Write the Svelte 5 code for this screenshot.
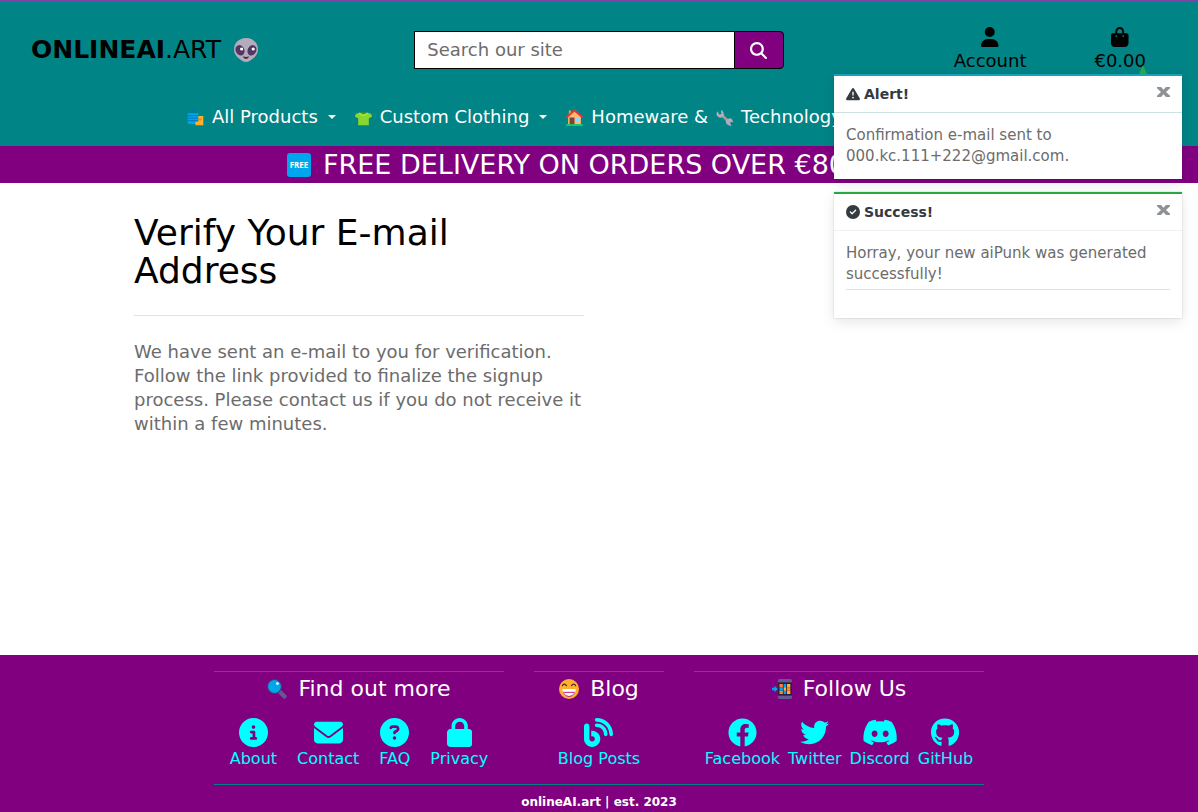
<script>
  const icons = {
    user: ['0 0 448 512', 'M224 256A128 128 0 1 0 224 0a128 128 0 1 0 0 256zm-45.7 48C79.8 304 0 383.8 0 482.3C0 498.7 13.3 512 29.7 512H418.3c16.4 0 29.7-13.3 29.7-29.7C448 383.8 368.2 304 269.7 304H178.3z'],
    bag: ['0 0 448 512', 'M160 112c0-35.3 28.7-64 64-64s64 28.7 64 64v48H160V112zm-48 48H48c-26.5 0-48 21.5-48 48V416c0 53 43 96 96 96H352c53 0 96-43 96-96V208c0-26.5-21.5-48-48-48H336V112C336 50.1 285.9 0 224 0S112 50.1 112 112v48zm24 48a24 24 0 1 1 0 48 24 24 0 1 1 0-48zm152 24a24 24 0 1 1 48 0 24 24 0 1 1 -48 0z'],
    search: ['0 0 512 512', 'M416 208c0 45.9-14.9 88.3-40 122.7L502.6 457.4c12.5 12.5 12.5 32.8 0 45.3s-32.8 12.5-45.3 0L330.7 376c-34.4 25.2-76.8 40-122.7 40C93.1 416 0 322.9 0 208S93.1 0 208 0S416 93.1 416 208zM208 352a144 144 0 1 0 0-288 144 144 0 1 0 0 288z'],
    warning: ['0 0 512 512', 'M256 32c14.2 0 27.3 7.5 34.5 19.8l216 368c7.3 12.4 7.3 27.7 .2 40.1S486.3 480 472 480H40c-14.3 0-27.6-7.7-34.7-20.1s-7-27.8 .2-40.1l216-368C228.7 39.5 241.8 32 256 32zm0 128c-13.3 0-24 10.7-24 24V296c0 13.3 10.7 24 24 24s24-10.7 24-24V184c0-13.3-10.7-24-24-24zm32 224a32 32 0 1 0 -64 0 32 32 0 1 0 64 0z'],
    check: ['0 0 512 512', 'M256 512A256 256 0 1 0 256 0a256 256 0 1 0 0 512zM369 209L241 337c-9.4 9.4-24.6 9.4-33.9 0l-64-64c-9.4-9.4-9.4-24.6 0-33.9s24.6-9.4 33.9 0l47 47L335 175c9.4-9.4 24.6-9.4 33.9 0s9.4 24.6 0 33.9z'],
    info: ['0 0 512 512', 'M256 512A256 256 0 1 0 256 0a256 256 0 1 0 0 512zM216 336h24V272H216c-13.3 0-24-10.7-24-24s10.7-24 24-24h48c13.3 0 24 10.7 24 24v88h8c13.3 0 24 10.7 24 24s-10.7 24-24 24H216c-13.3 0-24-10.7-24-24s10.7-24 24-24zm40-208a32 32 0 1 1 0 64 32 32 0 1 1 0-64z'],
    envelope: ['0 0 512 512', 'M48 64C21.5 64 0 85.5 0 112c0 15.1 7.1 29.3 19.2 38.4L236.8 313.6c11.4 8.5 27 8.5 38.4 0L492.8 150.4c12.1-9.1 19.2-23.3 19.2-38.4c0-26.5-21.5-48-48-48H48zM0 176V384c0 35.3 28.7 64 64 64H448c35.3 0 64-28.7 64-64V176L294.4 339.2c-22.8 17.1-54 17.1-76.8 0L0 176z'],
    question: ['0 0 512 512', 'M256 512A256 256 0 1 0 256 0a256 256 0 1 0 0 512zM169.8 165.3c7.9-22.3 29.1-37.3 52.8-37.3h58.3c34.9 0 63.1 28.3 63.1 63.1c0 22.6-12.1 43.5-31.7 54.8L280 264.4c-.2 13-10.9 23.6-24 23.6c-13.3 0-24-10.7-24-24V250.5c0-8.6 4.6-16.5 12.1-20.8l44.3-25.4c4.7-2.7 7.6-7.7 7.6-13.1c0-8.4-6.8-15.1-15.1-15.1H222.6c-3.4 0-6.4 2.1-7.5 5.3l-.4 1.2c-4.4 12.5-18.2 19-30.6 14.6s-19-18.2-14.6-30.6l.4-1.2zM224 352a32 32 0 1 1 64 0 32 32 0 1 1 -64 0z'],
    lock: ['0 0 448 512', 'M144 144v48H304V144c0-44.2-35.8-80-80-80s-80 35.8-80 80zM80 192V144C80 64.5 144.5 0 224 0s144 64.5 144 144v48h16c35.3 0 64 28.7 64 64V448c0 35.3-28.7 64-64 64H64c-35.3 0-64-28.7-64-64V256c0-35.3 28.7-64 64-64H80z'],
    blog: ['0 0 512 512', 'M192 32c0 17.7 14.3 32 32 32c123.7 0 224 100.3 224 224c0 17.7 14.3 32 32 32s32-14.3 32-32C512 128.9 383.1 0 224 0c-17.7 0-32 14.3-32 32zm0 96c0 17.7 14.3 32 32 32c70.7 0 128 57.3 128 128c0 17.7 14.3 32 32 32s32-14.3 32-32c0-106-86-192-192-192c-17.7 0-32 14.3-32 32zM96 144c0-26.5-21.5-48-48-48S0 117.5 0 144V368c0 79.5 64.5 144 144 144s144-64.5 144-144s-64.5-144-144-144H128v96h16c26.5 0 48 21.5 48 48s-21.5 48-48 48s-48-21.5-48-48V144z'],
    facebook: ['0 0 512 512', 'M504 256C504 119 393 8 256 8S8 119 8 256c0 123.78 90.69 226.38 209.25 245V327.69h-63V256h63v-54.64c0-62.15 37-96.48 93.67-96.48 27.14 0 55.52 4.84 55.52 4.84v61h-31.28c-30.8 0-40.41 19.12-40.41 38.73V256h68.78l-11 71.69h-57.78V501C413.31 482.38 504 379.78 504 256z'],
    twitter: ['0 0 512 512', 'M459.37 151.716c.325 4.548.325 9.097.325 13.645 0 138.72-105.583 298.558-298.558 298.558-59.452 0-114.68-17.219-161.137-47.106 8.447.974 16.568 1.299 25.34 1.299 49.055 0 94.213-16.568 130.274-44.832-46.132-.975-84.792-31.188-98.112-72.772 6.498.974 12.995 1.624 19.818 1.624 9.421 0 18.843-1.3 27.614-3.573-48.081-9.747-84.143-51.98-84.143-102.985v-1.299c13.969 7.797 30.214 12.67 47.431 13.319-28.264-18.843-46.781-51.005-46.781-87.391 0-19.492 5.197-37.36 14.294-52.954 51.655 63.675 129.3 105.258 216.365 109.807-1.624-7.797-2.599-15.918-2.599-24.04 0-57.828 46.782-104.934 104.934-104.934 30.213 0 57.502 12.67 76.67 33.137 23.715-4.548 46.456-13.32 66.599-25.34-7.798 24.366-24.366 44.833-46.132 57.827 21.117-2.273 41.584-8.122 60.426-16.243-14.292 20.791-32.161 39.308-52.628 54.253z'],
    discord: ['0 0 640 512', 'M524.531,69.836a1.5,1.5,0,0,0-.764-.7A485.065,485.065,0,0,0,404.081,32.03a1.816,1.816,0,0,0-1.923.91,337.461,337.461,0,0,0-14.9,30.6,447.848,447.848,0,0,0-134.426,0,309.541,309.541,0,0,0-15.135-30.6,1.89,1.89,0,0,0-1.924-.91A483.689,483.689,0,0,0,116.085,69.137a1.712,1.712,0,0,0-.788.676C39.068,183.651,18.186,294.69,28.43,404.354a2.016,2.016,0,0,0,.765,1.375A487.666,487.666,0,0,0,176.02,479.918a1.9,1.9,0,0,0,2.063-.676A348.2,348.2,0,0,0,208.12,430.4a1.86,1.86,0,0,0-1.019-2.588,321.173,321.173,0,0,1-45.868-21.853,1.885,1.885,0,0,1-.185-3.126c3.082-2.309,6.166-4.711,9.109-7.137a1.819,1.819,0,0,1,1.9-.256c96.229,43.917,200.41,43.917,295.5,0a1.812,1.812,0,0,1,1.924.233c2.944,2.426,6.027,4.851,9.132,7.16a1.884,1.884,0,0,1-.162,3.126,301.407,301.407,0,0,1-45.89,21.83,1.875,1.875,0,0,0-1,2.611,391.055,391.055,0,0,0,30.014,48.815,1.864,1.864,0,0,0,2.063.7A486.048,486.048,0,0,0,610.7,405.729a1.882,1.882,0,0,0,.765-1.352C623.729,277.594,590.933,167.465,524.531,69.836ZM222.491,337.58c-28.972,0-52.844-26.587-52.844-59.239S193.056,219.1,222.491,219.1c29.665,0,53.306,26.82,52.843,59.239C275.334,310.993,251.924,337.58,222.491,337.58Zm195.38,0c-28.971,0-52.843-26.587-52.843-59.239S388.437,219.1,417.871,219.1c29.667,0,53.307,26.82,52.844,59.239C470.715,310.993,447.538,337.58,417.871,337.58Z'],
    github: ['0 0 496 512', 'M165.9 397.4c0 2-2.3 3.6-5.2 3.6-3.3.3-5.6-1.3-5.6-3.6 0-2 2.3-3.6 5.2-3.6 3-.3 5.6 1.3 5.6 3.6zm-31.1-4.5c-.7 2 1.3 4.3 4.3 4.9 2.6 1 5.6 0 6.2-2s-1.3-4.3-4.3-5.2c-2.6-.7-5.5.3-6.2 2.3zm44.2-1.7c-2.9.7-4.9 2.6-4.6 4.9.3 2 2.9 3.3 5.9 2.6 2.9-.7 4.9-2.6 4.6-4.6-.3-1.9-3-3.2-5.9-2.9zM244.8 8C106.1 8 0 113.3 0 252c0 110.9 69.8 205.8 169.5 239.2 12.8 2.3 17.3-5.6 17.3-12.1 0-6.2-.3-40.4-.3-61.4 0 0-70 15-84.7-29.8 0 0-11.4-29.1-27.8-36.6 0 0-22.9-15.7 1.6-15.4 0 0 24.9 2 38.6 25.8 21.9 38.6 58.6 27.5 72.9 20.9 2.3-16 8.8-27.1 16-33.7-55.9-6.2-112.3-14.3-112.3-110.5 0-27.5 7.6-41.3 23.6-58.9-2.6-6.5-11.1-33.3 2.6-67.9 20.9-6.5 69 27 69 27 20-5.6 41.5-8.5 62.8-8.5s42.8 2.9 62.8 8.5c0 0 48.1-33.6 69-27 13.7 34.7 5.2 61.4 2.6 67.9 16 17.7 25.8 31.5 25.8 58.9 0 96.5-58.9 104.2-114.8 110.5 9.2 7.9 17 22.9 17 46.4 0 33.7-.3 75.4-.3 83.6 0 6.5 4.6 14.4 17.3 12.1C428.2 457.8 496 362.9 496 252 496 113.3 383.5 8 244.8 8z'],
  };

  const footerGroups = [
    { title: 'Find out more', emoji: 'glass', wide: true, links: [['info', 'About'], ['envelope', 'Contact'], ['question', 'FAQ'], ['lock', 'Privacy']] },
    { title: 'Blog', emoji: 'grin', wide: false, links: [['blog', 'Blog Posts']] },
    { title: 'Follow Us', emoji: 'phone', wide: true, social: true, links: [['facebook', 'Facebook'], ['twitter', 'Twitter'], ['discord', 'Discord'], ['github', 'GitHub']] },
  ];

  let toasts = $state([
    { kind: 'info', icon: 'warning', title: 'Alert!', text: 'Confirmation e-mail sent to 000.kc.111+222@gmail.com.' },
    { kind: 'success', icon: 'check', title: 'Success!', text: 'Horray, your new aiPunk was generated successfully!' },
  ]);

  const dismiss = (kind) => (toasts = toasts.filter((t) => t.kind !== kind));
</script>

{#snippet icon(name)}
  <svg class="icon" viewBox={icons[name][0]} fill="currentColor" aria-hidden="true"><path d={icons[name][1]} /></svg>
{/snippet}

{#snippet emoji(name)}
  <svg class="emoji" viewBox="0 0 24 24" aria-hidden="true">
    {#if name === 'alien'}
      <path d="M12 0C5 0 0 5 0 11.500c0 5 3.500 8 7 10.500 3 2.500 7 2.500 10 0 3.500-2.500 7-5.500 7-10.500C24 5 19 0 12 0z" fill="#b4acbc" />
      <ellipse cx="6" cy="12.300" rx="4.300" ry="5.400" transform="rotate(-25 6 12.300)" fill="#533566" />
      <ellipse cx="18" cy="12.300" rx="4.300" ry="5.400" transform="rotate(25 18 12.300)" fill="#533566" />
      <circle cx="7.600" cy="11" r="1.600" fill="#fff" /><circle cx="19.200" cy="11" r="1.600" fill="#fff" />
      <path d="M9.500 19c1 1.800 4 1.800 5 0l-2.500.500z" fill="#402a32" stroke="#402a32" />
    {:else if name === 'bags'}
      <path d="M6 7V4q0-3 3-3t3 3v3" fill="none" stroke="#0074ba" stroke-width="1.500" />
      <path d="M1 6h15v15H3q-2 0-2-2z" fill="#00a6ed" />
      <path d="M1 9.500h15M1 13h15M1 16.500h15" stroke="#0074ba" stroke-width="1.300" />
      <path d="M16 10h7v13H12v-5h4z" fill="#ffb02e" /><path d="M17 13q0 3 1.500 3t1.500-3" fill="none" stroke="#d67d00" stroke-width="1.300" />
    {:else if name === 'shirt'}
      <path d="M7 5Q12 8 17 5l6 2 1 4-4.500 2V23h-15V13L0 11l1-4z" fill="#86d72f" />
      <path d="M8 5q4 5 8 0l-2-.500h-4z" fill="#44911b" /><path d="M6 6q6 6 12 0" fill="none" stroke="#c3ef3c" stroke-width="1.300" />
    {:else if name === 'house'}
      <path d="M4 2h3v7H4z" fill="#c3b139" /><path d="M3 10 12 3l9 8v11H3z" fill="#ffb978" />
      <path d="M0 11 12 0l12 11-1.500 2L12 4 1.500 13z" fill="#f8312f" />
      <path d="M5 12h7v10H5z" fill="#7d4533" /><path d="M14 12h5v5h-5z" fill="#8dd9ff" /><path d="M0 21.500h24V24H0z" fill="#00d26a" />
    {:else if name === 'wrench'}
      <path d="m7 7 12 12" stroke="#9b9b9b" stroke-width="4" />
      <path d="M2 3q-3 5 1 8 4 3 8-1 1-5-3-9L7 4l1 3-3 1zM16 14q-4 3-1 7 3 3 7 3l-2-4 1-2 3 1q0-5-4-6z" fill="#b4acbc" />
    {:else if name === 'free'}
      <rect width="24" height="24" rx="3" fill="#00a6ed" />
      <text x="12" y="15" text-anchor="middle" font-size="8" font-weight="700" font-family="Open Sans, sans-serif" fill="#fff">FREE</text>
    {:else if name === 'glass'}
      <path d="m15 15 6 6" stroke="#635994" stroke-width="5" stroke-linecap="round" />
      <circle cx="9" cy="9" r="9" fill="#533566" /><circle cx="9" cy="9" r="7.700" fill="#00a6ed" /><circle cx="12.500" cy="5.500" r="1.700" fill="#fff" />
    {:else if name === 'grin'}
      <circle cx="12" cy="12" r="12" fill="#ffb02e" />
      <path d="M4 8q2-4 5 0M15 8q3-4 5 0" fill="none" stroke="#402a32" stroke-width="1.500" stroke-linecap="round" />
      <path d="M4 12h16q0 9-8 9t-8-9z" fill="#fff" /><path d="M5 16h14M5.500 17q2 4 6.500 4t6.500-4" fill="none" stroke="#bb1d80" stroke-width="1.200" />
    {:else if name === 'phone'}
      <rect x="7" width="17" height="24" rx="2" fill="#635994" /><path d="M7 4h17v16H7z" fill="#321b41" />
      <path d="M9 6h4v4H9zM18 10h4v4h-4zM9 14h4v4H9z" fill="#ff822d" /><path d="M14 6h3v4h-3zM9 10h4v4H9zM14 14h3v4h-3z" fill="#00a6ed" />
      <path d="M18 6h4v4h-4zM14 10h3v4h-3zM18 14h4v4h-4z" fill="#ffb02e" />
      <path d="M0 10.500h3V8l4 4-4 4v-2.500H0z" fill="#00a6ed" />
    {/if}
  </svg>
{/snippet}

<div class="page">
  <header>
    <div class="top">
      <a class="brand" href="#home"><span><strong>ONLINEAI</strong>.ART</span>{@render emoji('alien')}</a>
      <form class="search" onsubmit={(e) => e.preventDefault()}>
        <input type="search" aria-label="Search our site" placeholder="Search our site" />
        <button type="submit" aria-label="Search">{@render icon('search')}</button>
      </form>
      <div class="tools">
        <a href="#account">{@render icon('user')}<span>Account</span></a>
        <a href="#bag">{@render icon('bag')}<span>€0.00</span></a>
      </div>
    </div>
    <nav>
      <a href="#all">{@render emoji('bags')}All Products<i class="caret"></i></a>
      <a href="#clothing">{@render emoji('shirt')}Custom Clothing<i class="caret"></i></a>
      <a href="#home-tech">{@render emoji('house')}Homeware &amp; {@render emoji('wrench')}Technology</a>
    </nav>
  </header>

  <div class="banner">{@render emoji('free')}<span>FREE DELIVERY ON ORDERS OVER €80</span></div>

  <main>
    <section>
      <h1>Verify Your E-mail Address</h1>
      <hr />
      <p>We have sent an e-mail to you for verification. Follow the link provided to finalize the signup process. Please contact us if you do not receive it within a few minutes.</p>
    </section>
  </main>

  <footer>
    <div class="groups">
      {#each footerGroups as group}
        <section class:wide={group.wide}>
          <h2>{@render emoji(group.emoji)}{group.title}</h2>
          <div class="links" class:social={group.social}>
            {#each group.links as [name, label]}
              <a href={'#' + name}>{@render icon(name)}<span>{label}</span></a>
            {/each}
          </div>
        </section>
      {/each}
    </div>
    <p class="copy">onlineAI.art | est. 2023</p>
  </footer>

  <div class="toasts">
    {#each toasts as toast (toast.kind)}
      <article class="toast {toast.kind}" role="status">
        <div class="toast-head">
          {@render icon(toast.icon)}<strong>{toast.title}</strong>
          <button type="button" aria-label="Close" onclick={() => dismiss(toast.kind)}>
            <svg viewBox="0 0 13 10" fill="currentColor" aria-hidden="true"><path d="M0 0h4l2.500 2.800L9 0h4v1.200L9 5l4 3.800V10H9L6.500 7.200 4 10H0V8.800L4 5 0 1.200z" /></svg>
          </button>
        </div>
        <div class="toast-body">
          <p>{toast.text}</p>
          {#if toast.kind === 'success'}<hr />{/if}
        </div>
      </article>
    {/each}
  </div>
</div>

<style>
  :global(body) { margin: 0; background: #fff; }
  * { box-sizing: border-box; }
  .page {
    position: relative;
    display: flex;
    flex-direction: column;
    min-height: 100vh;
    overflow-x: hidden;
    font-family: "DejaVu Sans", sans-serif;
    font-size: 18px;
    line-height: 24px;
    color: #000;
  }
  a { color: inherit; text-decoration: none; }
  p, h1, h2 { margin: 0; font-weight: 400; }
  hr { width: 100%; margin: 0; border: 0; border-top: 1px solid #e2e2e2; }
  svg { display: block; flex: none; }
  .emoji { width: 17px; height: 17px; }

  header { border-top: 2px solid #7b45a8; background: #008486; }
  .top { display: grid; grid-template-columns: 1fr 1fr 1fr; align-items: center; padding-top: 25px; }
  .brand { display: flex; align-items: center; gap: 13px; padding-left: 31px; font-size: 25px; }
  .brand .emoji { width: 24px; height: 24px; }
  .search { display: flex; height: 38px; margin: 0 15px; }
  .search input {
    flex: 1;
    min-width: 0;
    padding: 0 12px;
    border: 1px solid #000;
    border-right: 0;
    border-radius: 0;
    background: #fff;
    font: inherit;
    appearance: none;
  }
  .search input::placeholder { color: #6c6c6c; opacity: 1; }
  .search button {
    display: grid;
    place-items: center;
    width: 50px;
    padding: 0;
    border: 1px solid #000;
    border-radius: 0 4px 4px 0;
    background: #800080;
    color: #fff;
  }
  .search .icon { width: 17px; height: 17px; }
  .tools { display: flex; justify-content: flex-end; gap: 68px; padding-right: 52px; }
  .tools a { display: flex; flex-direction: column; align-items: center; gap: 2px; }
  .tools .icon { height: 20px; }
  nav { display: flex; gap: 19px; padding: 32px 187px 17px; color: #fff; white-space: nowrap; }
  nav a { display: flex; align-items: center; gap: 8px; }
  .caret { margin-left: 2px; border: 4px solid transparent; border-top-color: currentColor; border-bottom: 0; }

  .banner {
    display: flex;
    align-items: center;
    gap: 12px;
    padding: 0 287px;
    background: #800080;
    color: #fff;
    font-size: 27px;
    line-height: 37px;
    white-space: nowrap;
  }
  .banner .emoji { width: 24px; height: 24px; }

  main { flex: 1; width: 100%; max-width: 960px; margin: 0 auto; padding: 31px 15px; }
  main section { max-width: 450px; }
  h1 { font-size: 36px; line-height: 38px; }
  main hr { margin: 25px 0 24px; }
  main p { color: #6c6c6c; }

  footer { padding-top: 16px; background: #800080; color: #fff; }
  .groups { display: flex; gap: 30px; width: 770px; max-width: 100%; margin: 0 auto; }
  footer section { flex: 130; border-top: 1px solid #008080; padding-bottom: 13px; }
  footer section.wide { flex: 290; }
  h2 { display: flex; justify-content: center; align-items: center; gap: 11px; padding: 5px 0; font-size: 22px; }
  h2 .emoji { width: 20px; height: 20px; }
  .links { display: flex; justify-content: center; gap: 20px; padding-top: 12px; color: #0ff; font-size: 16px; white-space: nowrap; }
  .links.social { gap: 8px; }
  .links a { display: flex; flex-direction: column; align-items: center; }
  .links .icon { height: 29px; }
  .copy { width: 770px; max-width: 100%; margin: 0 auto; padding-top: 7px; border-top: 1px solid #008080; font-size: 12px; line-height: 20px; font-weight: 700; text-align: center; }

  .toasts { position: absolute; top: 74px; right: 16px; display: flex; flex-direction: column; gap: 13px; width: 348px; font-size: 15px; line-height: 21px; }
  .toasts::before { content: ""; position: absolute; top: -9px; right: 35px; border: 4px solid transparent; border-top: 0; border-bottom: 9px solid #28a745; }
  .toast { border-top: 2px solid #17a2b8; background: #fff; box-shadow: 0 4px 12px rgba(0, 0, 0, 0.1), 0 0 1px rgba(0, 0, 0, 0.3); }
  .toast.success { border-top-color: #28a745; min-height: 126px; }
  .toast-head { display: flex; align-items: center; gap: 4px; height: 37px; padding: 0 12px; border-bottom: 1px solid #cce2e3; color: #343a40; font-size: 14px; }
  .success .toast-head { border-bottom-color: #f0f0f0; }
  .toast-head .icon { height: 14px; }
  .toast-head button { margin: 0 0 4px auto; padding: 0; border: 0; background: none; color: #8f9295; }
  .toast-head button svg { width: 13px; height: 10px; }
  .toast-body { padding: 12px; color: #6c6c6c; }
  .toast-body hr { margin-top: 4px; }
</style>
